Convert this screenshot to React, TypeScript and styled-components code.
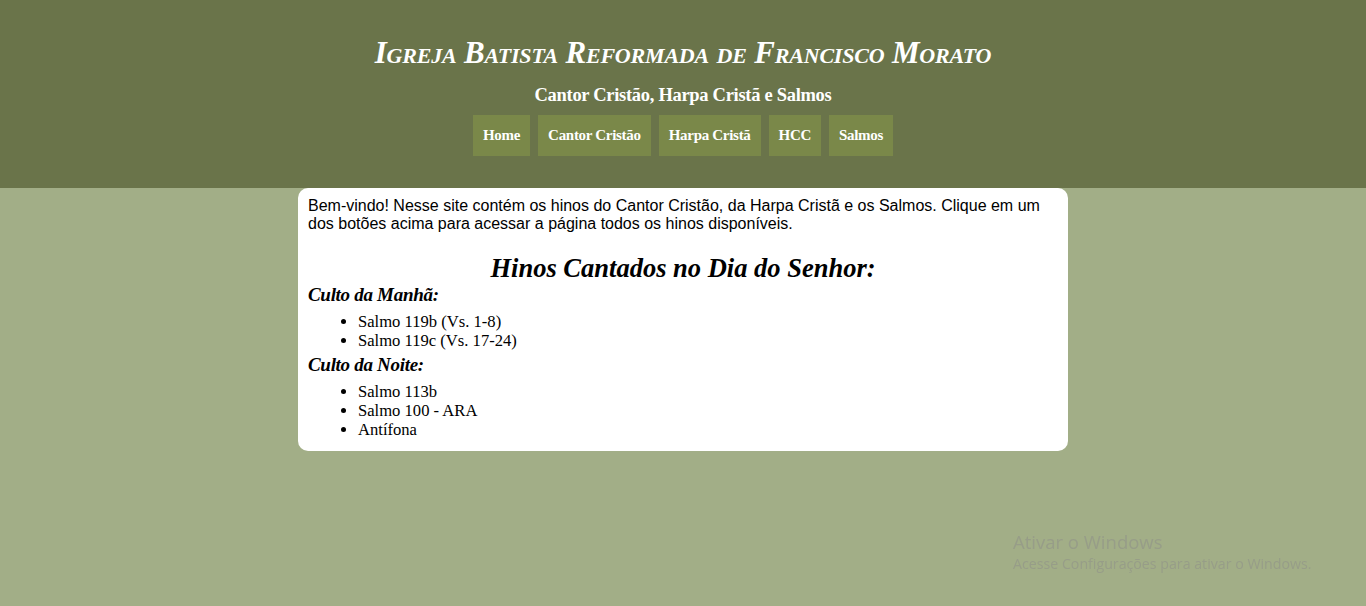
import React from "react";
import styled, { createGlobalStyle } from "styled-components";

const Global = createGlobalStyle`
  html, body { margin: 0; padding: 0; }
  body { background: #a2ae87; font-family: "Liberation Sans", Arial, sans-serif; min-height: 606px; }
`;

const Header = styled.header`
  background: #6a744a;
  height: 188px;
  display: flex;
  flex-direction: column;
  align-items: center;
  padding-top: 33px;
  box-sizing: border-box;
  color: #fff;
  font-family: "Liberation Serif", "Times New Roman", serif;
`;

const Title = styled.h1`
  margin: 0;
  font-size: 31px;
  line-height: 40px;
  font-style: italic;
  font-weight: bold;
  font-variant: small-caps;
  letter-spacing: -0.2px;
`;

const Subtitle = styled.h2`
  margin: 7px 0 0;
  font-size: 18.5px;
  line-height: 30px;
  font-weight: bold;
  letter-spacing: -0.3px;
`;

const Nav = styled.nav`
  display: flex;
  gap: 8px;
  margin-top: 5px;
`;

const NavButton = styled.a`
  display: flex;
  align-items: center;
  height: 41px;
  padding: 0 10px;
  background: #7a8849;
  color: #fff;
  font-size: 15px;
  font-weight: bold;
  letter-spacing: -0.3px;
  text-decoration: none;
`;

const Card = styled.main`
  width: 770px;
  margin: 0 auto;
  background: #fff;
  border-radius: 10px;
  padding: 9px 10px 9px;
  box-sizing: border-box;
  color: #000;
`;

const Intro = styled.p`
  margin: 0;
  font-size: 16px;
  line-height: 18px;
`;

const Heading = styled.h2`
  margin: 20px 0 0;
  text-align: center;
  font-family: "Liberation Serif", "Times New Roman", serif;
  font-style: italic;
  font-weight: bold;
  font-size: 26.5px;
  line-height: 30px;
`;

const Sub = styled.h3`
  margin: 0;
  font-family: "Liberation Serif", "Times New Roman", serif;
  font-style: italic;
  font-weight: bold;
  font-size: 19px;
  line-height: 24px;
  letter-spacing: -0.3px;
`;

const List = styled.ul`
  margin: 5px 0 3px;
  padding-left: 50px;
  font-family: "Liberation Serif", Georgia, serif;
  font-size: 16.6px;
  line-height: 19px;
`;

const Watermark = styled.div`
  position: fixed;
  left: 1013px;
  top: 530px;
  color: #979d88;
  font-family: "Open Sans", "Noto Sans", sans-serif;
  pointer-events: none;
`;

const WmTitle = styled.div`
  font-size: 18.5px;
  line-height: 24px;
`;

const WmText = styled.div`
  font-size: 14.2px;
  line-height: 20px;
`;

const navItems = ["Home", "Cantor Cristão", "Harpa Cristã", "HCC", "Salmos"];

export default function App() {
  return (
    <>
      <Global />
      <Header>
        <Title>Igreja Batista Reformada de Francisco Morato</Title>
        <Subtitle>Cantor Cristão, Harpa Cristã e Salmos</Subtitle>
        <Nav>
          {navItems.map((n) => (
            <NavButton key={n} href="#">{n}</NavButton>
          ))}
        </Nav>
      </Header>
      <Card>
        <Intro>
          Bem-vindo! Nesse site contém os hinos do Cantor Cristão, da Harpa Cristã e os Salmos. Clique em um dos botões acima para acessar a página todos os hinos disponíveis.
        </Intro>
        <Heading>Hinos Cantados no Dia do Senhor:</Heading>
        <Sub>Culto da Manhã:</Sub>
        <List>
          <li>Salmo 119b (Vs. 1-8)</li>
          <li>Salmo 119c (Vs. 17-24)</li>
        </List>
        <Sub>Culto da Noite:</Sub>
        <List>
          <li>Salmo 113b</li>
          <li>Salmo 100 - ARA</li>
          <li>Antífona</li>
        </List>
      </Card>
      <Watermark>
        <WmTitle>Ativar o Windows</WmTitle>
        <WmText>Acesse Configurações para ativar o Windows.</WmText>
      </Watermark>
    </>
  );
}
